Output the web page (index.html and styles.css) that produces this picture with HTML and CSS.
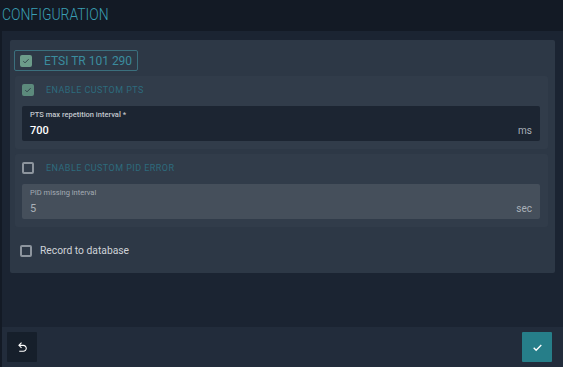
FILE: index.html
```html
<!DOCTYPE html>
<html lang="en">
<head>
    <meta charset="UTF-8">
    <meta name="viewport" content="width=device-width, initial-scale=1.0">
    <title>Configuration</title>
    <link rel="stylesheet" href="styles.css">
</head>
<body>
    <div class="page">
        <div class="header">
            <h1>Configuration</h1>
        </div>

        <div class="main">
            <div class="content">
                <div class="card">
                    <label class="chip">
                        <span class="box checked"><svg viewBox="0 0 24 24"><path d="M4 12.5l5 5L20 6.5"/></svg></span>
                        <span>ETSI TR 101 290</span>
                    </label>

                    <div class="section">
                        <label class="section-head">
                            <span class="box checked dim"><svg viewBox="0 0 24 24"><path d="M4 12.5l5 5L20 6.5"/></svg></span>
                            <span>Enable custom PTS</span>
                        </label>
                        <div class="field">
                            <div class="field-label">PTS max repetition interval *</div>
                            <div class="field-row">
                                <span class="field-value">700</span>
                                <span class="unit">ms</span>
                            </div>
                        </div>
                    </div>

                    <div class="section">
                        <label class="section-head">
                            <span class="box"></span>
                            <span>Enable custom PID error</span>
                        </label>
                        <div class="field disabled">
                            <div class="field-label">PID missing interval</div>
                            <div class="field-row">
                                <span class="field-value">5</span>
                                <span class="unit">sec</span>
                            </div>
                        </div>
                    </div>

                    <label class="plain-check">
                        <span class="box"></span>
                        <span>Record to database</span>
                    </label>
                </div>
            </div>

            <div class="footer">
                <button class="btn btn-back" title="Back">
                    <svg viewBox="0 0 24 24"><path d="M20 13.5C20 17.09 17.09 20 13.5 20H6V18H13.5C16 18 18 16 18 13.5S16 9 13.5 9H7.83L10.91 12.09L9.5 13.5L4 8L9.5 2.5L10.92 3.91L7.83 7H13.5C17.09 7 20 9.91 20 13.5Z"/></svg>
                </button>
                <button class="btn btn-ok" title="Save">
                    <svg viewBox="0 0 24 24"><path d="M5 12.5l4.5 4.5L19 7.5"/></svg>
                </button>
            </div>
        </div>
    </div>
</body>
</html>
```

FILE: styles.css
```css
html, body {
    margin: 0;
    height: 100%;
}
body {
    font-family: Roboto, "Liberation Sans", sans-serif;
    background-color: #131a25;
    color: #d3d7db;
    overflow: hidden;
}
.page {
    display: flex;
    flex-direction: column;
    height: 367px;
}
.header {
    height: 31px;
    padding-left: 2px;
    box-sizing: border-box;
}
.header h1 {
    margin: 0;
    padding-top: 5px;
    font-size: 16px;
    font-weight: 300;
    text-transform: uppercase;
    color: #3a9fb3;
    transform: scaleX(0.87);
    transform-origin: left center;
}
.main {
    flex: 1;
    margin-left: 2px;
    display: flex;
    flex-direction: column;
    background-color: #1b2432;
}
.content {
    flex: 1;
    padding: 9px 8px 0 8px;
}
.card {
    background-color: #2d3846;
    border-radius: 2px;
    padding: 10px 7px 16px 5px;
}
.chip {
    display: inline-flex;
    align-items: center;
    gap: 12px;
    height: 21px;
    padding: 0 5px 0 5px;
    margin-left: -1px;
    border: 1px solid #3b6f7d;
    border-radius: 2px;
    font-size: 12px;
    color: #3b8c9e;
    box-sizing: border-box;
}
.box {
    display: inline-flex;
    align-items: center;
    justify-content: center;
    width: 12px;
    height: 12px;
    border: 2px solid #8d959e;
    border-radius: 2px;
    box-sizing: border-box;
    flex-shrink: 0;
}
.box.checked {
    background-color: #6c9c8a;
    border-color: #6c9c8a;
}
.box.dim {
    background-color: #5c8a7c;
    border-color: #5c8a7c;
}
.box svg {
    width: 10px;
    height: 10px;
    fill: none;
    stroke: #2b3742;
    stroke-width: 2.6;
}
.section {
    margin-top: 5px;
    background-color: #313c4a;
    border-radius: 3px;
    padding: 7px 8px 8px 7px;
}
.section-head {
    display: flex;
    align-items: center;
    gap: 12px;
    height: 14px;
    margin-bottom: 9px;
    font-size: 9px;
    letter-spacing: 0.45px;
    text-transform: uppercase;
    color: #2d6b7d;
}
.field {
    background-color: #1c2532;
    border-radius: 2px;
    height: 35px;
    padding: 4px 8px 0 8px;
    box-sizing: border-box;
}
.field-label {
    font-size: 7.5px;
    font-weight: 500;
    color: #c3c8ce;
    height: 10px;
}
.field-row {
    display: flex;
    justify-content: space-between;
    align-items: baseline;
    margin-top: 4px;
}
.field-value {
    font-size: 11px;
    font-weight: 500;
    color: #ffffff;
}
.unit {
    font-size: 10px;
    color: #aab1b8;
}
.field.disabled {
    background-color: #454f5b;
}
.field.disabled .field-label {
    color: #a4abb3;
    font-weight: 400;
}
.field.disabled .field-value {
    color: #aab1b8;
    font-weight: 400;
}
.plain-check {
    display: flex;
    align-items: center;
    gap: 8px;
    margin-top: 17px;
    padding-left: 5px;
    font-size: 10.3px;
    color: #cfd3d8;
}
.footer {
    height: 40px;
    background-color: #222c3b;
    display: flex;
    justify-content: space-between;
    align-items: center;
    padding: 0 11px 0 5px;
}
.btn {
    width: 30px;
    height: 30px;
    border: none;
    border-radius: 1px;
    display: flex;
    align-items: center;
    justify-content: center;
    cursor: pointer;
    padding: 0;
}
.btn-back {
    background-color: #161f2b;
}
.btn-back svg {
    width: 13px;
    height: 13px;
    fill: #ffffff;
}
.btn-ok {
    background-color: #267e89;
}
.btn-ok svg {
    width: 13px;
    height: 13px;
    fill: none;
    stroke: #ffffff;
    stroke-width: 2.5;
}
```
